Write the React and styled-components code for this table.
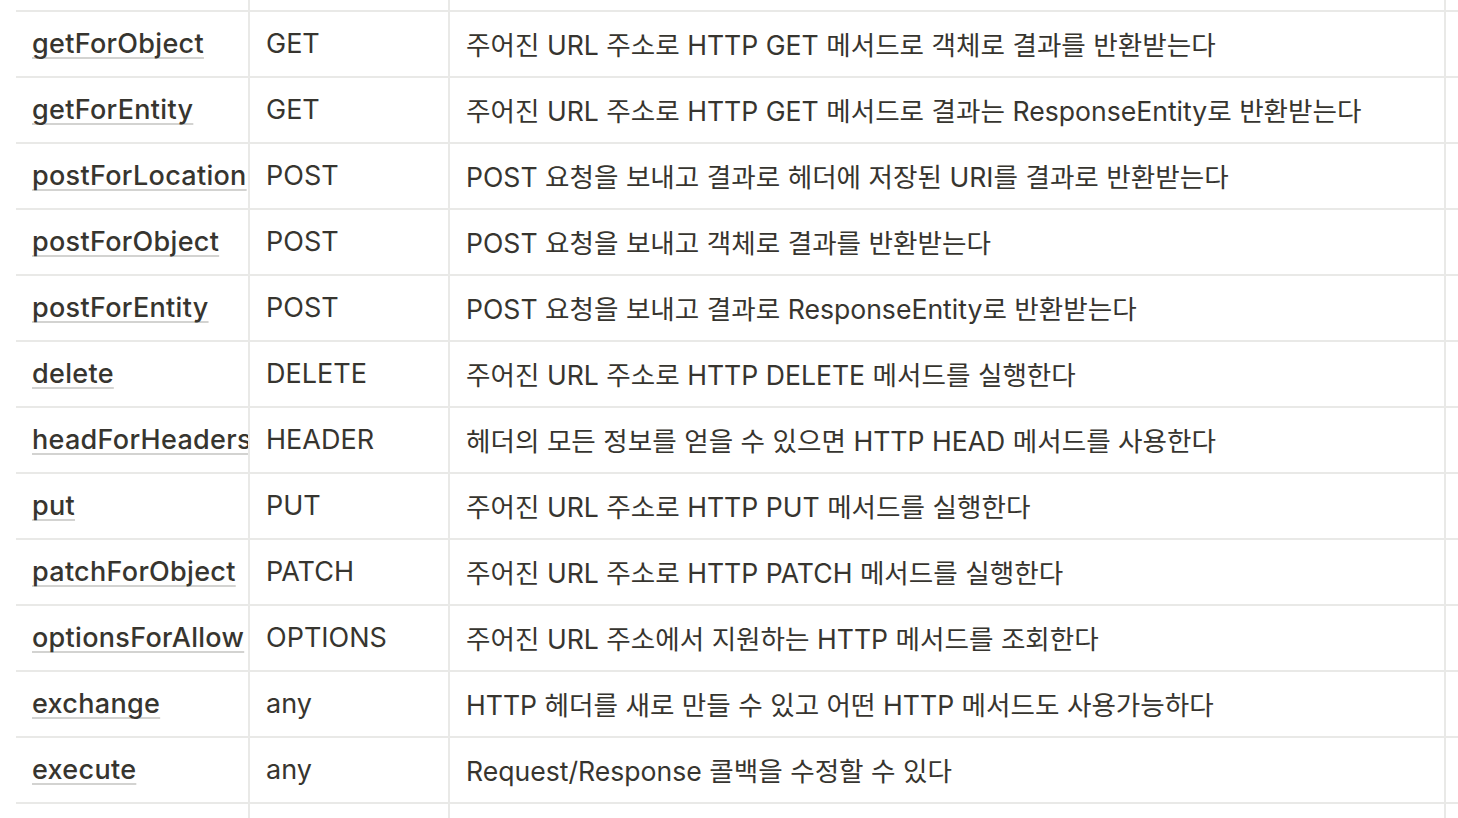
import React from "react";
import styled, { createGlobalStyle } from "styled-components";

const Global = createGlobalStyle`
  html, body {
    margin: 0;
    padding: 0;
    background: #ffffff;
    overflow: hidden;
  }
  body {
    font-family: Inter, "Noto Sans CJK KR", sans-serif;
    color: rgb(55, 53, 47);
  }
`;

const Page = styled.div`
  width: 1458px;
  height: 818px;
  overflow: hidden;
  padding-left: 16px;
  box-sizing: border-box;
`;

const Table = styled.div`
  display: grid;
  grid-template-columns: 234px 200px 996px 240px;
  width: 1670px;
`;

const Cell = styled.div`
  box-sizing: border-box;
  height: ${(p) => (p.$h ? p.$h : 66)}px;
  border-right: 2px solid #e9e9e7;
  border-bottom: 2px solid #e9e9e7;
  padding: 0 16px 1px;
  display: flex;
  align-items: center;
  font-size: ${(p) => (p.$desc ? "26.6px" : "27px")};
  white-space: nowrap;
  overflow: hidden;
  font-weight: ${(p) => (p.$bold ? 500 : 400)};
  letter-spacing: ${(p) => (p.$bold ? "0.3px" : "0")};
`;

const Link = styled.span`
  color: rgb(55, 53, 47);
  text-decoration: underline;
  text-decoration-color: rgba(55, 53, 47, 0.22);
  text-decoration-thickness: 2px;
  text-underline-offset: 4px;
  text-decoration-skip-ink: none;
`;

const rows = [
  ["getForObject", "GET", "주어진 URL 주소로 HTTP GET 메서드로 객체로 결과를 반환받는다"],
  ["getForEntity", "GET", "주어진 URL 주소로 HTTP GET 메서드로 결과는 ResponseEntity로 반환받는다"],
  ["postForLocation", "POST", "POST 요청을 보내고 결과로 헤더에 저장된 URI를 결과로 반환받는다"],
  ["postForObject", "POST", "POST 요청을 보내고 객체로 결과를 반환받는다"],
  ["postForEntity", "POST", "POST 요청을 보내고 결과로 ResponseEntity로 반환받는다"],
  ["delete", "DELETE", "주어진 URL 주소로 HTTP DELETE 메서드를 실행한다"],
  ["headForHeaders", "HEADER", "헤더의 모든 정보를 얻을 수 있으면 HTTP HEAD 메서드를 사용한다"],
  ["put", "PUT", "주어진 URL 주소로 HTTP PUT 메서드를 실행한다"],
  ["patchForObject", "PATCH", "주어진 URL 주소로 HTTP PATCH 메서드를 실행한다"],
  ["optionsForAllow", "OPTIONS", "주어진 URL 주소에서 지원하는 HTTP 메서드를 조회한다"],
  ["exchange", "any", "HTTP 헤더를 새로 만들 수 있고 어떤 HTTP 메서드도 사용가능하다"],
  ["execute", "any", "Request/Response 콜백을 수정할 수 있다"],
];

export default function App() {
  return (
    <Page>
      <Global />
      <Table>
        {[0, 1, 2, 3].map((i) => (
          <Cell key={"top" + i} $h={12} />
        ))}
        {rows.map(([m, h, d]) => (
          <React.Fragment key={m}>
            <Cell $bold>
              <Link>{m}</Link>
            </Cell>
            <Cell>{h}</Cell>
            <Cell $desc>{d}</Cell>
            <Cell />
          </React.Fragment>
        ))}
        {[0, 1, 2, 3].map((i) => (
          <Cell key={"bot" + i} />
        ))}
      </Table>
    </Page>
  );
}
